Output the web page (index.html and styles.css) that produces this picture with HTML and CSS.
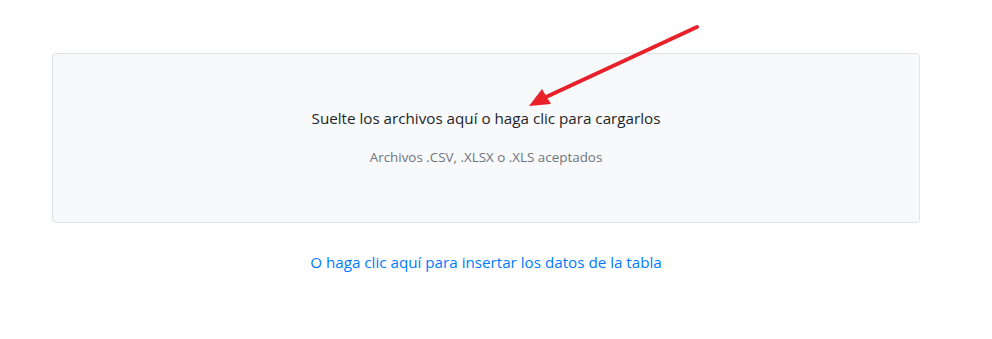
FILE: index.html
```html
<!DOCTYPE html>
<html lang="es">
<head>
    <meta charset="UTF-8">
    <title>Cargar archivos</title>
    <link rel="stylesheet" href="styles.css">
</head>
<body>
    <div class="page">
        <div class="dropzone">
            <div class="drop-title">Suelte los archivos aquí o haga clic para cargarlos</div>
            <div class="drop-hint">Archivos .CSV, .XLSX o .XLS aceptados</div>
        </div>
        <div class="alt-action">
            <a href="#" class="alt-link">O haga clic aquí para insertar los datos de la tabla</a>
        </div>
    </div>
    <svg class="arrow" width="992" height="339" viewBox="0 0 992 339">
        <line x1="697" y1="27" x2="546" y2="97" stroke="#e8202a" stroke-width="4" stroke-linecap="round"/>
        <polygon points="529,106 542,89 551,104" fill="#e8202a"/>
    </svg>
</body>
</html>
```
FILE: styles.css
```css
* {
    margin: 0;
    padding: 0;
    box-sizing: border-box;
}

body {
    font-family: 'Open Sans', 'Noto Sans', sans-serif;
    background: #fff;
    color: #212529;
    width: 992px;
    height: 339px;
    overflow: hidden;
    position: relative;
}

.page {
    width: 868px;
    margin-left: 52px;
    padding-top: 53px;
}

.dropzone {
    height: 170px;
    background: #f8f9fa;
    border: 1px solid #dee2e6;
    border-radius: 4px;
    display: flex;
    flex-direction: column;
    align-items: center;
    padding-top: 53px;
}

.drop-title {
    font-size: 15.2px;
    line-height: 22px;
}

.drop-hint {
    font-size: 13.4px;
    color: #6c757d;
    margin-top: 19px;
    line-height: 18px;
}

.alt-action {
    text-align: center;
    margin-top: 28px;
}

.alt-link {
    color: #007bff;
    text-decoration: none;
    font-size: 15.2px;
    line-height: 22px;
}

.arrow {
    position: absolute;
    left: 0;
    top: 0;
    pointer-events: none;
}
```
